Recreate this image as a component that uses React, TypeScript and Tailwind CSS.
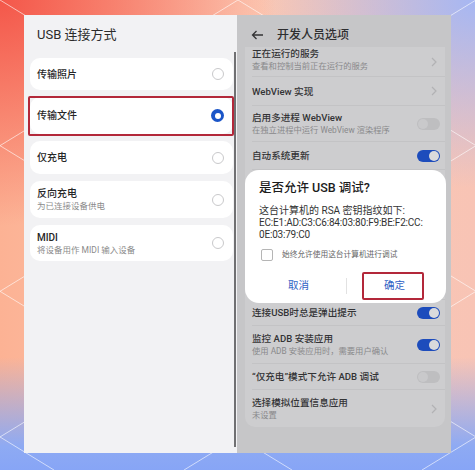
import React from "react";

const FONT = "font-['Roboto','Noto_Sans_CJK_SC','Noto_Sans',sans-serif]";

// Thin diamond lattice drawn over the gradient backdrop
function Lattice() {
  const lines: React.ReactElement[] = [];
  const slope = 0.612;
  const period = 238;
  const dx = 470 / slope;
  for (let k = -4; k <= 6; k++) {
    const x0 = k * period;
    lines.push(<line key={`a${k}`} x1={x0} y1={0} x2={x0 + dx} y2={470} />);
    lines.push(<line key={`b${k}`} x1={x0} y1={0} x2={x0 - dx} y2={470} />);
  }
  return (
    <svg
      className="absolute inset-0"
      width={475}
      height={470}
      stroke="rgba(255,255,255,0.6)"
      strokeWidth={1}
    >
      {lines}
    </svg>
  );
}

function Radio({ checked }: { checked?: boolean }) {
  if (checked) {
    return (
      <div className="w-[13px] h-[13px] rounded-full bg-[#1b55c8] flex items-center justify-center">
        <div className="w-[6px] h-[6px] rounded-full bg-white" />
      </div>
    );
  }
  return <div className="w-[12px] h-[12px] rounded-full border border-[#c9c9cb] bg-white" />;
}

function UsbCard({
  title,
  sub,
  checked,
  h,
  marked,
}: {
  title: string;
  sub?: string;
  checked?: boolean;
  h: string;
  marked?: boolean;
}) {
  return (
    <div className={`relative bg-white rounded-[10px] pl-[7px] pr-[9px] flex items-center justify-between ${h}`}>
      <div className="flex flex-col">
        <span className="text-[10px] leading-[13px] font-medium text-[#262626]">{title}</span>
        {sub && <span className="text-[8.5px] leading-[12px] text-[#8b8b8b]">{sub}</span>}
      </div>
      <Radio checked={checked} />
      {marked && (
        <div className="absolute -left-[2px] -right-[1px] -top-[1px] -bottom-[2px] border-2 border-[#b3283a] rounded-[2px]" />
      )}
    </div>
  );
}

function UsbPanel() {
  return (
    <div className="relative w-[213px] h-[438px] bg-[#f2f2f4] flex flex-col pl-[6px] pr-[4px]">
      <div className="pl-[7px] pt-[11px] h-[43px] text-[13px] leading-[18px] text-[#2b2b2b]">USB 连接方式</div>
      <div className="flex flex-col gap-[7px]">
        <UsbCard title="传输照片" h="h-[32px]" />
        <UsbCard title="传输文件" h="h-[37px]" checked marked />
        <UsbCard title="仅充电" h="h-[33px]" />
        <UsbCard title="反向充电" sub="为已连接设备供电" h="h-[37px]" />
        <UsbCard title="MIDI" sub="将设备用作 MIDI 输入设备" h="h-[36px]" />
      </div>
      <div className="absolute right-[1px] top-[37px] bottom-[6px] w-[2px] bg-[#707072]" />
    </div>
  );
}

function Toggle({ on }: { on?: boolean }) {
  if (on) {
    return (
      <div className="w-[23px] h-[12px] rounded-full bg-[#1d4cbc] flex items-center justify-end pr-[1px]">
        <div className="w-[10px] h-[10px] rounded-full bg-[#dadadc]" />
      </div>
    );
  }
  return (
    <div className="w-[23px] h-[12px] rounded-full bg-[#bebec0] flex items-center pl-[1px]">
      <div className="w-[10px] h-[10px] rounded-full bg-[#c9c9cb]" />
    </div>
  );
}

function Chevron() {
  return (
    <svg width="6" height="10" viewBox="0 0 6 10" className="mr-[3px]">
      <path d="M1 1l4 4-4 4" fill="none" stroke="#b2b2b4" strokeWidth="1.2" />
    </svg>
  );
}

function DevRow({
  title,
  sub,
  right,
  h,
  last,
  top,
}: {
  title: string;
  sub?: string;
  right?: React.ReactNode;
  h: string;
  last?: boolean;
  top?: boolean;
}) {
  return (
    <div
      className={`flex justify-between pr-[5px] ${top ? "items-start" : "items-center"} ${h} ${
        last ? "" : "border-b border-[#c3c3c5]"
      }`}
    >
      <div className="flex flex-col">
        <span className="text-[9.6px] leading-[13px] font-medium text-[#333335]">{title}</span>
        {sub && <span className="text-[8.3px] leading-[13px] text-[#89898b]">{sub}</span>}
      </div>
      {right}
    </div>
  );
}

function UsbDebugDialog() {
  return (
    <div className="absolute left-[8px] top-[155px] w-[201px] h-[133px] bg-white rounded-[14px] px-[14px] pt-[10px] flex flex-col">
      <div className="text-[12.5px] leading-[16px] font-medium text-[#1c1c1c]">是否允许 USB 调试?</div>
      <div className="mt-[9px] text-[10px] leading-[12px] text-[#333]">
        <div>这台计算机的 RSA 密钥指纹如下:</div>
        <div className="tracking-[-0.2px]">EC:E1:AD:C3:C6:84:03:80:F9:BE:F2:CC:</div>
        <div className="tracking-[-0.2px]">0E:03:79:C0</div>
      </div>
      <div className="mt-[8px] flex items-center ml-[2px] h-[12px]">
        <div className="w-[12px] h-[12px] rounded-[2px] border border-[#b5b5b5]" />
        <span className="ml-[9px] text-[7.7px] leading-[12px] text-[#666]">始终允许使用这台计算机进行调试</span>
      </div>
      <div className="mt-[12px] -mx-[14px] flex items-center h-[26px]">
        <div className="ml-[6px] w-[95px] flex justify-center text-[10.5px] text-[#2f62c4]">取消</div>
        <div className="w-[1px] h-[16px] bg-[#e2e2e2]" />
        <div className="relative w-[95px] h-[26px] flex items-center justify-center text-[10.5px] text-[#2f62c4]">
          确定
          <div className="absolute left-[15px] top-[-1px] w-[62px] h-[28px] border-2 border-[#b3283a] rounded-[2px]" />
        </div>
      </div>
    </div>
  );
}

function DevPanel() {
  return (
    <div className="relative w-[214px] h-[438px] bg-[#c6c6c8] flex flex-col overflow-hidden">
      <div className="h-[32px] pt-[8px] flex items-center pl-[14px]">
        <svg width="13" height="10" viewBox="0 0 13 10">
          <path d="M12 5H1.5M5.5 1L1.5 5l4 4" fill="none" stroke="#333335" strokeWidth="1.3" />
        </svg>
        <span className="ml-[13px] text-[12px] leading-[16px] font-medium text-[#2e2e30]">开发人员选项</span>
      </div>
      <div className="ml-[8px] mr-[6px] bg-[#cdcdcf] rounded-b-[10px] pl-[7px]">
        <DevRow title="正在运行的服务" sub="查看和控制当前正在运行的服务" right={<div className="self-center"><Chevron /></div>} h="h-[30px]" top />
        <DevRow title="WebView 实现" right={<Chevron />} h="h-[29px]" />
        <DevRow title="启用多进程 WebView" sub="在独立进程中运行 WebView 渲染程序" right={<Toggle />} h="h-[36px]" />
        <DevRow title="自动系统更新" right={<Toggle on />} h="h-[28px]" />
        {/* rows under the confirmation dialog */}
        <div className="h-[130px] border-b border-[#c3c3c5]" />
        <DevRow title="连接USB时总是弹出提示" right={<Toggle on />} h="h-[26px]" />
        <DevRow title="监控 ADB 安装应用" sub="使用 ADB 安装应用时，需要用户确认" right={<Toggle on />} h="h-[38px]" />
        <DevRow title="“仅充电”模式下允许 ADB 调试" right={<Toggle />} h="h-[26px]" />
        <DevRow title="选择模拟位置信息应用" sub="未设置" right={<Chevron />} h="h-[37px]" last />
      </div>
      <UsbDebugDialog />
    </div>
  );
}

export default function App() {
  return (
    <div
      className={`relative w-[475px] h-[470px] overflow-hidden ${FONT} [background-image:radial-gradient(ellipse_58%_48%_at_0%_0%,#f4574a_0%,rgba(244,87,74,0)_100%),radial-gradient(ellipse_45%_40%_at_100%_0%,#a6b7f3_0%,rgba(166,183,243,0)_100%),linear-gradient(to_top,#87a5f6_0%,#8eaaf3_5%,rgba(150,172,242,0)_24%),linear-gradient(90deg,#fcb294_0%,#fcc8b2_50%,#f8c4b5_100%)]`}
    >
      <Lattice />
      <div className="relative flex pt-[15px] pl-[24px]">
        <UsbPanel />
        <DevPanel />
      </div>
    </div>
  );
}
